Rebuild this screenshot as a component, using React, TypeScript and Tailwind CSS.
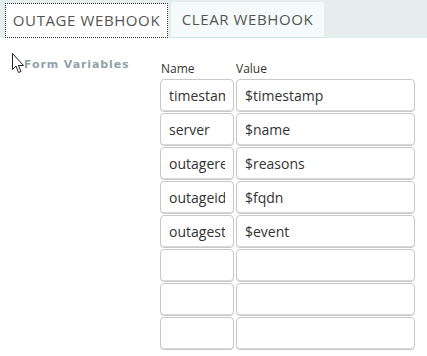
import React from "react";

const ROWS: { name: string; value: string }[] = [
  { name: "timestamp", value: "$timestamp" },
  { name: "server", value: "$name" },
  { name: "outagereasons", value: "$reasons" },
  { name: "outageid", value: "$fqdn" },
  { name: "outagestatus", value: "$event" },
  { name: "", value: "" },
  { name: "", value: "" },
  { name: "", value: "" },
];

const font = { fontFamily: '"Open Sans", "Noto Sans", sans-serif' };

export default function App() {
  return (
    <div className="h-[356px] w-[427px] overflow-hidden bg-white text-[#333]" style={font}>
      <div className="flex h-[38px] items-end gap-[3px] bg-[#e5eeec] pl-[5px]">
        <button className="h-[35px] w-[163px] border border-dotted border-[#333] bg-white text-[15px] tracking-[0.6px] text-[#555]">
          OUTAGE WEBHOOK
        </button>
        <button className="h-[36px] w-[153px] rounded-t-[3px] border-b border-[#cfe3e6] bg-[#f5fbfb] text-[15px] tracking-[0.6px] text-[#555]">
          CLEAR WEBHOOK
        </button>
      </div>

      <div className="flex pt-[17px]">
        <div className="relative w-[160px] pl-[24px] pt-[3px]">
          <svg
            className="absolute left-[11px] top-[-2px]"
            width="14"
            height="21"
            viewBox="0 0 14 21"
          >
            <path
              d="M1.5 0.5 L1.5 16.5 L5 13 L7.5 19.5 L10 18.5 L7.5 12.5 L12.5 12.5 Z"
              fill="white"
              stroke="#222"
              strokeWidth="1"
            />
          </svg>
          <span
            className="block text-[11px] font-bold leading-[14px] tracking-[0.9px] text-[#8fa3a8]"
            style={{ fontFamily: '"DejaVu Sans", Verdana, sans-serif' }}
          >
            Form Variables
          </span>
        </div>

        <div className="pt-[6px]">
          <div className="flex h-[16px] items-center text-[12px] text-[#333]">
            <span className="w-[75px] pl-[1px]">Name</span>
            <span className="pl-[1px]">Value</span>
          </div>
          <div className="mt-[2px] flex flex-col gap-[1px]">
            {ROWS.map((row, i) => (
              <div key={i} className="flex gap-[2px]">
                <input
                  readOnly
                  value={row.name}
                  className="h-[33px] w-[74px] rounded-[4px] border border-[#c8c8c8] px-[8px] text-[14px] text-[#333] outline-none shadow-[inset_0_-1px_0_#d8d8d8]"
                  style={font}
                />
                <input
                  readOnly
                  value={row.value}
                  className="h-[33px] w-[179px] rounded-[4px] border border-[#c8c8c8] px-[8px] text-[14px] text-[#333] outline-none shadow-[inset_0_-1px_0_#d8d8d8]"
                  style={font}
                />
              </div>
            ))}
          </div>
        </div>
      </div>
    </div>
  );
}
